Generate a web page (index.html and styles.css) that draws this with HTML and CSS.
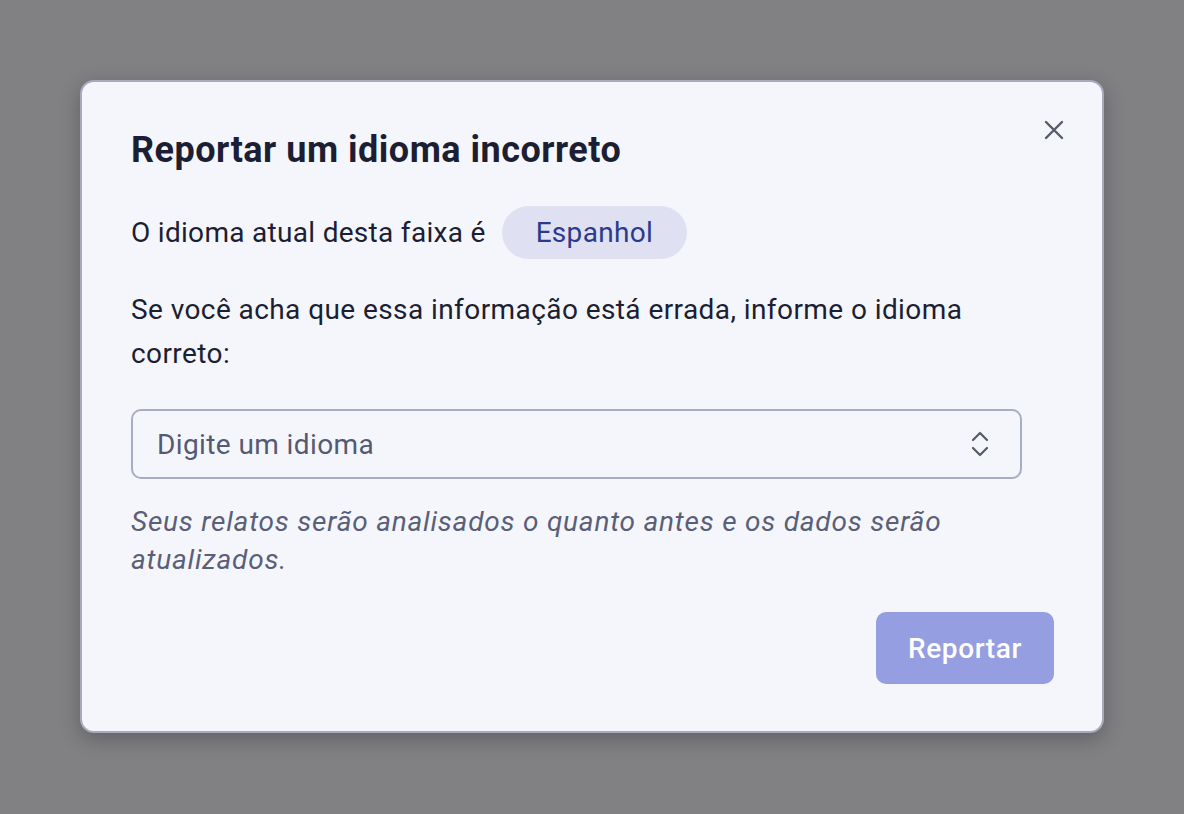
FILE: index.html
```html
<!DOCTYPE html>
<html lang="pt">
<head>
<meta charset="utf-8">
<link rel="stylesheet" href="styles.css">
</head>
<body>
<div class="overlay">
  <div class="dialog">
    <button class="close" aria-label="Fechar">
      <svg width="22" height="22" viewBox="0 0 22 22"><path d="M3 3 L19 19 M19 3 L3 19" stroke="#555a6a" stroke-width="2.4" stroke-linecap="round" fill="none"/></svg>
    </button>
    <h2 class="title">Reportar um idioma incorreto</h2>
    <div class="current">
      <span>O idioma atual desta faixa é</span>
      <span class="pill">Espanhol</span>
    </div>
    <p class="text">Se você acha que essa informação está errada, informe o idioma correto:</p>
    <div class="select">
      <span class="placeholder">Digite um idioma</span>
      <svg class="chev" width="20" height="28" viewBox="0 0 20 28"><path d="M3 10 L10 3 L17 10 M3 18 L10 25 L17 18" stroke="#555a6a" stroke-width="2.2" stroke-linecap="round" stroke-linejoin="round" fill="none"/></svg>
    </div>
    <p class="note">Seus relatos serão analisados o quanto antes e os dados serão atualizados.</p>
    <div class="actions">
      <button class="submit">Reportar</button>
    </div>
  </div>
</div>
</body>
</html>
```
FILE: styles.css
```css
html, body {
  margin: 0;
  padding: 0;
}
body {
  background: #818083;
  font-family: Roboto, "Noto Sans", sans-serif;
  width: 1184px;
  height: 814px;
  overflow: hidden;
}
.overlay {
  padding-top: 80px;
  padding-left: 80px;
}
.dialog {
  position: relative;
  box-sizing: border-box;
  width: 1024px;
  height: 653px;
  background: #f5f6fb;
  border: 2px solid #a7aabd;
  border-radius: 14px;
  box-shadow: 0 6px 20px rgba(0,0,0,0.25);
  padding: 46px 48px 0 49px;
  color: #1c1e33;
}
.close {
  position: absolute;
  top: 37px;
  right: 37px;
  background: none;
  border: none;
  padding: 0;
  width: 22px;
  height: 22px;
  cursor: pointer;
}
.close svg { display: block; }
.title {
  margin: 0;
  font-size: 36px;
  font-weight: 700;
  line-height: 44px;
  letter-spacing: 0.5px;
  color: #1c1e33;
}
.current {
  display: flex;
  align-items: center;
  gap: 16px;
  margin-top: 34px;
  font-size: 28px;
  letter-spacing: 0.3px;
}
.pill {
  display: inline-flex;
  align-items: center;
  height: 53px;
  padding: 0 34px;
  border-radius: 27px;
  background: #dfe1f3;
  color: #2d3a8c;
}
.text {
  margin: 29px 0 0 0;
  font-size: 28px;
  letter-spacing: 0.42px;
  line-height: 44px;
  max-width: 890px;
}
.select {
  box-sizing: border-box;
  display: flex;
  align-items: center;
  justify-content: space-between;
  margin-top: 33px;
  width: 891px;
  height: 70px;
  border: 2px solid #a9adc3;
  border-radius: 10px;
  padding: 0 30px 0 24px;
  font-size: 28px;
  letter-spacing: 0.4px;
  color: #545a73;
}
.chev { display: block; }
.note {
  margin: 24px 0 0 0;
  font-size: 28px;
  line-height: 38px;
  font-style: italic;
  letter-spacing: 0.78px;
  color: #5a5f78;
  max-width: 890px;
}
.actions {
  display: flex;
  justify-content: flex-end;
  margin-top: 33px;
}
.submit {
  width: 178px;
  height: 72px;
  border: none;
  border-radius: 10px;
  background: #959ee0;
  color: #ffffff;
  font-family: Roboto, "Noto Sans", sans-serif;
  font-size: 28px;
  letter-spacing: 0.6px;
  font-weight: 500;
}
```
